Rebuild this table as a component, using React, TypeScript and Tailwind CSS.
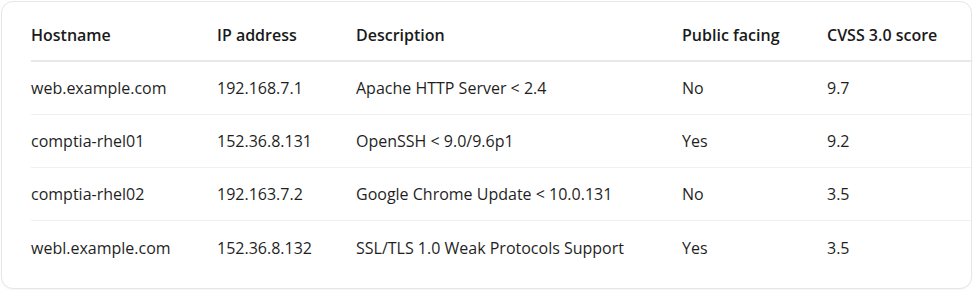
import React from "react";

const rows = [
  ["web.example.com", "192.168.7.1", "Apache HTTP Server < 2.4", "No", "9.7"],
  ["comptia-rhel01", "152.36.8.131", "OpenSSH < 9.0/9.6p1", "Yes", "9.2"],
  ["comptia-rhel02", "192.163.7.2", "Google Chrome Update < 10.0.131", "No", "3.5"],
  ["webl.example.com", "152.36.8.132", "SSL/TLS 1.0 Weak Protocols Support", "Yes", "3.5"],
];

const headers = ["Hostname", "IP address", "Description", "Public facing", "CVSS 3.0 score"];
const cols = "grid grid-cols-[186px_139px_326px_145px_119px]";

export default function App() {
  return (
    <div className="w-[975px] h-[291px] bg-white p-[1px]" style={{ fontFamily: '"Open Sans", "Noto Sans", sans-serif' }}>
      <div className="w-[971px] h-[288px] rounded-[12px] border border-[#e6e6e6] bg-white pl-[29px] pt-[8px] shadow-[0_1px_2px_rgba(0,0,0,0.04)]">
        <div className={`${cols} h-[52px] pb-[1px] items-center border-b-2 border-[#e8e8e8] text-[16px] font-semibold text-[#1a1a1a]`}>
          {headers.map((h) => (
            <div key={h}>{h}</div>
          ))}
        </div>
        {rows.map((r, i) => (
          <div
            key={i}
            className={`${cols} h-[53px] items-center text-[16px] text-[#1f1f1f] ${i < rows.length - 1 ? "border-b border-[#f0f0f0]" : ""}`}
          >
            {r.map((c, j) => (
              <div key={j}>{c}</div>
            ))}
          </div>
        ))}
      </div>
    </div>
  );
}
